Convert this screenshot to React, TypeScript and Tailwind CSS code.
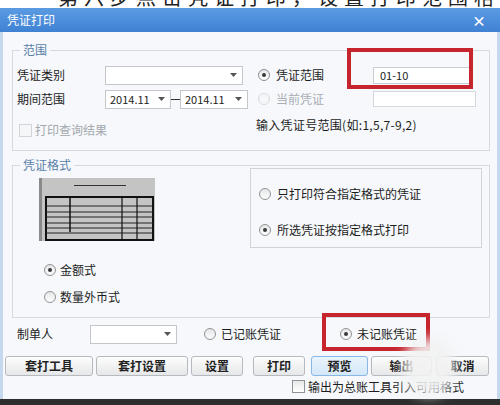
import React from "react";

function Radio({ checked = false, disabled = false }: { checked?: boolean; disabled?: boolean }) {
  return (
    <span
      className={
        "w-[12px] h-[12px] rounded-full border flex items-center justify-center shrink-0 " +
        (disabled ? "border-[#d6dbe0] bg-[#f4f6f8]" : "border-[#8f9296] bg-gradient-to-b from-[#e6e6e6] to-white")
      }
    >
      {checked && <span className="w-[4px] h-[4px] rounded-full bg-[#3a3a3a]" />}
    </span>
  );
}

function Check({ disabled = false }: { disabled?: boolean }) {
  return (
    <span
      className={
        "w-[13px] h-[13px] border shrink-0 " +
        (disabled ? "border-[#d0d5da] bg-[#f4f6f8]" : "border-[#8f9296] bg-gradient-to-b from-[#e8e8e8] to-white")
      }
    />
  );
}

function Select({ w, value = "" }: { w: string; value?: string }) {
  return (
    <div className={`${w} h-[19px] border border-[#c3c7cc] bg-white flex items-center justify-between pl-[4px] pr-[5px] shrink-0`}>
      <span className="text-[11px] leading-none text-[#222]">{value}</span>
      <svg width="7" height="4" viewBox="0 0 7 4">
        <path d="M0 0 H7 L3.5 4 Z" fill="#555" />
      </svg>
    </div>
  );
}

function Btn({ label, className = "", active = false }: { label: string; className?: string; active?: boolean }) {
  return (
    <div
      className={
        "h-[20px] rounded-[3px] border flex items-center justify-center text-[12px] font-bold text-[#222] shrink-0 " +
        (active
          ? "border-[#86b7e6] bg-gradient-to-b from-[#eaf4fc] to-[#d3e8f8] "
          : "border-[#b6b9bd] bg-gradient-to-b from-[#fdfdfd] to-[#e6e7e8] ") +
        className
      }
    >
      {label}
    </div>
  );
}

function FormatPreview() {
  const rows = [28, 34, 39, 45, 50, 55];
  return (
    <svg width="116" height="63" viewBox="0 0 116 63" className="shrink-0">
      <rect x="0" y="0" width="116" height="63" fill="#c4c4c4" />
      <rect x="0" y="0" width="3" height="63" fill="#8a8a8a" />
      <line x1="35" y1="7.5" x2="87" y2="7.5" stroke="#333" strokeWidth="1.2" />
      <rect x="7" y="19" width="107" height="43" fill="none" stroke="#111" strokeWidth="2" />
      {rows.map((y) => (
        <line key={y} x1="7" y1={y} x2="114" y2={y} stroke="#222" strokeWidth="1" />
      ))}
      <line x1="31" y1="19" x2="31" y2="54" stroke="#111" strokeWidth="1.5" />
      <line x1="83" y1="19" x2="83" y2="62" stroke="#111" strokeWidth="1.2" />
      <line x1="98" y1="19" x2="98" y2="62" stroke="#111" strokeWidth="1.2" />
    </svg>
  );
}

export default function App() {
  return (
    <div className="w-[500px] h-[405px] overflow-hidden bg-white font-['Noto_Sans_CJK_SC',sans-serif] text-[12px] text-[#1d1d1d] flex flex-col">
      <div className="h-[8px] overflow-hidden bg-white">
        <div className="-mt-[15px] ml-[58px] text-[20px] leading-[24px] text-[#222] whitespace-nowrap tracking-[6px]">
          第六步点击凭证打印，设置打印范围格式
        </div>
      </div>

      <div className="h-[24px] bg-gradient-to-b from-[#5a9be2] to-[#3f82d3] flex items-center justify-between pl-[7px] pr-[14px]">
        <span className="text-white text-[12px]">凭证打印</span>
        <span className="text-white text-[14px] font-bold leading-none">×</span>
      </div>

      <div className="h-[367px] bg-[#f6f8fb] border-l-[3px] border-r-[3px] border-[#c5d8ee] flex flex-col">
        {/* 范围 */}
        <fieldset className="mt-[10px] ml-[9px] mr-[7px] border border-[#d3dae2]">
          <legend className="ml-[7px] px-[3px] text-[#5a7fa8] leading-[16px]">范围</legend>
          <div className="flex pl-[4px] pt-[7px] pb-[11px]">
            <div className="w-[239px] flex flex-col">
              <div className="h-[20px] flex items-center">
                <span className="w-[88px]">凭证类别</span>
                <Select w="w-[138px]" />
              </div>
              <div className="mt-[4px] h-[20px] flex items-center">
                <span className="w-[88px]">期间范围</span>
                <Select w="w-[66px]" value="2014.11" />
                <span className="w-[9px] h-[1px] bg-[#333]" />
                <Select w="w-[68px]" value="2014.11" />
              </div>
              <div className="mt-[12px] h-[18px] flex items-center pl-[2px]">
                <Check disabled />
                <span className="ml-[3px] text-[#a3a8ad]">打印查询结果</span>
              </div>
            </div>
            <div className="flex flex-col">
              <div className="h-[20px] flex items-center">
                <div className="w-[117px] flex items-center pl-[2px]">
                  <Radio checked />
                  <span className="ml-[6px]">凭证范围</span>
                </div>
                <div className="relative w-[97px] h-[17px] border border-[#c9cdd2] bg-white flex items-center pl-[6px] text-[11px]">
                  01-10
                  <div className="absolute -left-[27px] -top-[20px] w-[126px] h-[41px] border-[4px] border-[#c6252e]" />
                </div>
              </div>
              <div className="mt-[4px] h-[20px] flex items-center">
                <div className="w-[117px] flex items-center pl-[2px]">
                  <Radio disabled />
                  <span className="ml-[6px] text-[#a9aeb3]">当前凭证</span>
                </div>
                <div className="w-[103px] h-[16px] border border-[#d4d8dc] bg-white" />
              </div>
              <div className="mt-[8px] h-[16px] flex items-center text-[12px] tracking-[0.3px]">输入凭证号范围(如:1,5,7-9,2)</div>
            </div>
          </div>
        </fieldset>

        {/* 凭证格式 */}
        <fieldset className="mt-[6px] ml-[9px] mr-[7px] border border-[#d3dae2]">
          <legend className="ml-[7px] px-[3px] text-[#5a7fa8] leading-[16px]">凭证格式</legend>
          <div className="flex items-start">
            <div className="ml-[26px] mt-[5px]">
              <FormatPreview />
            </div>
            <div className="ml-[95px] -mt-[5px] w-[232px] h-[80px] border border-[#cdd4dc] flex flex-col pl-[8px]">
              <div className="mt-[18px] h-[14px] flex items-center">
                <Radio />
                <span className="ml-[6px]">只打印符合指定格式的凭证</span>
              </div>
              <div className="mt-[22px] h-[14px] flex items-center">
                <Radio checked />
                <span className="ml-[6px]">所选凭证按指定格式打印</span>
              </div>
            </div>
          </div>
          <div className="mt-[14px] ml-[31px] h-[16px] flex items-center">
            <Radio checked />
            <span className="ml-[4px]">金额式</span>
          </div>
          <div className="mt-[11px] ml-[31px] h-[16px] flex items-center mb-[12px]">
            <Radio />
            <span className="ml-[4px]">数量外币式</span>
          </div>
        </fieldset>

        {/* 制单人 */}
        <div className="mt-[7px] h-[18px] flex items-center pl-[14px]">
          <span className="w-[73px]">制单人</span>
          <Select w="w-[87px]" />
          <div className="ml-[27px] flex items-center">
            <Radio />
            <span className="ml-[5px]">已记账凭证</span>
          </div>
          <div className="relative ml-[59px] flex items-center">
            <Radio checked />
            <span className="ml-[5px]">未记账凭证</span>
            <div className="absolute -left-[18px] -top-[12px] w-[108px] h-[38px] border-[4px] border-[#c6252e]" />
          </div>
        </div>

        {/* buttons */}
        <div className="relative mt-[13px] flex items-center pl-[2px]">
          <Btn label="套打工具" className="w-[88px]" />
          <Btn label="套打设置" className="ml-[3px] w-[92px]" />
          <Btn label="设置" className="ml-[3px] w-[52px]" />
          <Btn label="打印" className="ml-[10px] w-[52px]" />
          <Btn label="预览" className="ml-[6px] w-[57px]" active />
          <Btn label="输出" className="ml-[3px] w-[61px]" />
          <Btn label="取消" className="ml-[4px] w-[53px]" />
          <div className="absolute left-[400px] -top-[18px] w-[52px] h-[58px] rounded-full bg-[#f2f2f2]/90 blur-[6px]" />
        </div>

        <div className="mt-[4px] h-[13px] flex items-center pl-[289px]">
          <Check />
          <span className="ml-[3px] text-[12px]">输出为总账工具引入可用格式</span>
        </div>
      </div>

      <div className="flex-1 bg-[#2e2e2e]" />
    </div>
  );
}
